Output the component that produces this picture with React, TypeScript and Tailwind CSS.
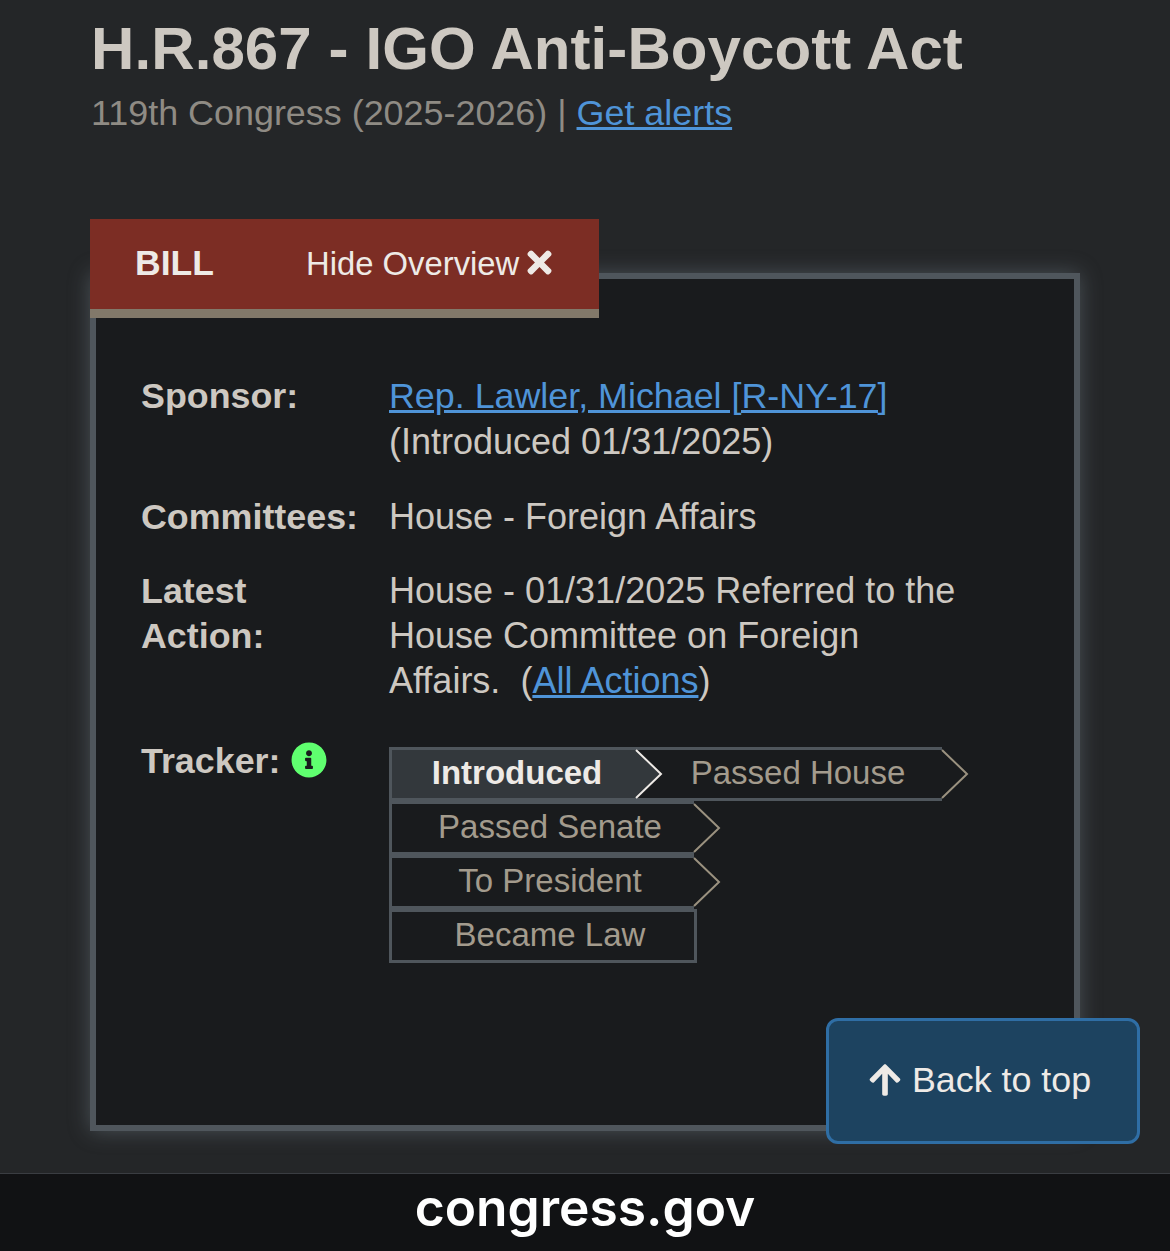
import React from "react";
import { FaTimes, FaArrowUp, FaInfoCircle } from "react-icons/fa";

const Chevron = ({ color, fill }: { color: string; fill: string }) => (
  <svg className="absolute left-full top-[-3px] z-10 -ml-px" width="28" height="54" viewBox="0 0 28 54" fill="none">
    <path d="M0 3L1 3L26 27L1 51L0 51Z" fill={fill} />
    <path d="M1 3L26 27L1 51" stroke={color} strokeWidth="2" />
  </svg>
);

const Step = ({ label, className, active, last }: { label: string; className: string; active?: boolean; last?: boolean }) => (
  <div
    className={`relative h-[54px] flex items-center justify-center border-y-[3px] border-[#4f565c] ${className} ${
      active ? "bg-[#33383c] font-bold text-[#eeeae6]" : "text-[#a39b8d]"
    }`}
  >
    {label}
    {!last && <Chevron color={active ? "#eeeae6" : "#9a917f"} fill={active ? "#33383c" : "#191b1d"} />}
  </div>
);

const Row = ({ label, children, className }: { label: React.ReactNode; children: React.ReactNode; className?: string }) => (
  <div className={`flex ${className ?? ""}`}>
    <div className="w-[248px] shrink-0 font-bold text-[35.85px] text-[#cdc8c1]">{label}</div>
    <div className="flex-1 text-[#cdc8c1] -translate-y-px">{children}</div>
  </div>
);

export default function App() {
  return (
    <div className="relative h-[1251px] overflow-hidden bg-[#242628] font-['Liberation_Sans',Arial,sans-serif] flex flex-col">
      <div className="flex-1 min-h-0 pl-[90px] pr-[90px]">
        <h1 className="pl-[1px] pt-[13px] text-[60px] leading-[72px] font-bold text-[#cdc8c1] tracking-[0.1px]">
          H.R.867 - IGO Anti-Boycott Act
        </h1>
        <p className="pl-[1px] mt-[6px] text-[35.9px] leading-[45px] text-[#8f8b84]">
          119th Congress (2025-2026) | <a className="text-[#4f94d8] underline">Get alerts</a>
        </p>
        <div className="mt-[83px] w-[509px] h-[99px] relative z-10 flex items-center bg-[#7c2d24] border-b-[9px] border-[#82796a] text-[#eeeae6]">
          <span className="ml-[45px] w-[171px] text-[35.5px] font-bold">BILL</span>
          <span className="text-[32.8px] flex items-center gap-[8px]">
            Hide Overview <FaTimes className="text-[35px] -mt-[4px] -ml-[5px]" />
          </span>
        </div>
        <div className="-mt-[45px] w-[990px] h-[858px] border-[6px] border-[#4f565c] bg-[#191b1d] shadow-[0_0_20px_rgba(130,145,155,0.4)] pl-[45px] pt-[95px] text-[36px] leading-[45px]">
          <Row label="Sponsor:">
            <a className="text-[#4f94d8] underline text-[35.85px]">Rep. Lawler, Michael [R-NY-17]</a>
            <br />
            (Introduced 01/31/2025)
          </Row>
          <Row label="Committees:" className="mt-[30px]">
            House - Foreign Affairs
          </Row>
          <Row label={<>Latest<br />Action:</>} className="mt-[29px]">
            House - 01/31/2025 Referred to the
            <br />
            House Committee on Foreign
            <br />
            Affairs.&nbsp; (<a className="text-[#4f94d8] underline">All Actions</a>)
          </Row>
          <div className="mt-[35px] flex">
            <div className="w-[248px] shrink-0 font-bold text-[35.85px] text-[#cdc8c1] flex items-start gap-[11px]">
              Tracker:
              <FaInfoCircle className="text-[36px] text-[#5fff6f] mt-[3px]" />
            </div>
            <div className="mt-[8px] w-[590px] flex flex-wrap content-start text-[33px] leading-[40px]">
              <Step label="Introduced" active className="w-[247px] border-l-[3px] pl-[6px] pb-[2px]" />
              <Step label="Passed House" className="w-[306px] pl-[18px] pb-[2px]" />
              <Step label="Passed Senate" className="w-[305px] border-l-[3px] pl-[14px] pb-[2px]" />
              <Step label="To President" className="w-[305px] border-l-[3px] pl-[14px] pb-[2px]" />
              <Step label="Became Law" last className="w-[308px] border-x-[3px] pl-[14px] pb-[2px]" />
            </div>
          </div>
        </div>
      </div>
      <button className="absolute left-[826px] top-[1018px] z-20 w-[314px] h-[126px] pr-[8px] rounded-[12px] border-[3px] border-[#2f6ea5] bg-[#1d4360] text-[#eeeae6] text-[35.8px] flex items-center justify-center gap-[9px]">
        <FaArrowUp className="text-[36px] -mt-[3px]" /> Back to top
      </button>
      <footer className="h-[78px] shrink-0 border-t border-[#3a3d42] bg-[#111214] flex items-center justify-center pb-[10px] text-white text-[51.5px] font-semibold font-['Inter',sans-serif]">
        congress.gov
      </footer>
    </div>
  );
}
